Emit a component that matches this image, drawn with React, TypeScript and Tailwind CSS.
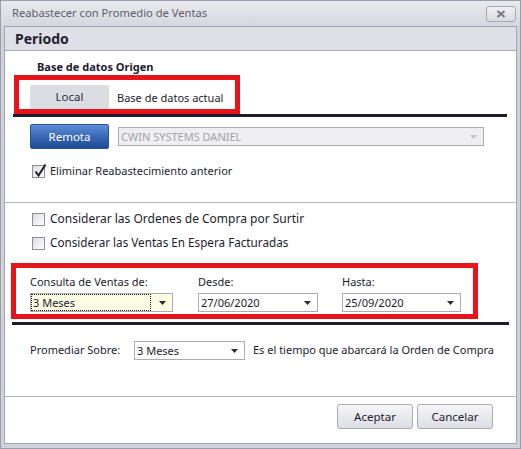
import React from "react";

function Arrow({ light }: { light?: boolean }) {
  return (
    <svg width="7" height="4" viewBox="0 0 7 4" className="shrink-0">
      <path d="M0 0h7L3.5 4z" fill={light ? "#c4c4cc" : "#2b2b33"} />
    </svg>
  );
}

function Combo({
  value,
  className,
  yellow,
  disabled,
}: {
  value: string;
  className: string;
  yellow?: boolean;
  disabled?: boolean;
}) {
  return (
    <div
      className={`flex h-[19px] items-center border border-[#abadb3] pr-[6px] ${
        yellow ? "bg-[#fdfde3]" : disabled ? "bg-[#efeff1]" : "bg-white"
      } ${className}`}
    >
      {yellow ? (
        <div className="mr-[8px] flex h-full flex-1 items-center border border-dotted border-[#222] pl-px leading-none">
          {value}
        </div>
      ) : (
        <div className={`flex-1 pl-[2px] leading-none ${disabled ? "text-[#a3a3a8]" : ""}`}>{value}</div>
      )}
      <Arrow light={disabled} />
    </div>
  );
}

function Check({ checked, label, className }: { checked?: boolean; label: string; className?: string }) {
  return (
    <div className={`flex h-[18px] items-center gap-[5px] pl-[27px] ${className ?? ""}`}>
      <div className="relative h-[13px] w-[13px] border border-[#8e8f94] bg-gradient-to-br from-[#dcdce0] to-white">
        {checked && (
          <svg width="15" height="15" viewBox="0 0 15 15" className="absolute -top-[3px] left-0">
            <path d="M2.5 8.5 L5.5 12.5 L12.5 1.5" fill="none" stroke="#1e1e26" strokeWidth="2" />
          </svg>
        )}
      </div>
      <span>{label}</span>
    </div>
  );
}

function Button({ children }: { children: React.ReactNode }) {
  return (
    <div className="flex h-[25px] w-[76px] items-center justify-center rounded-[3px] border border-[#a9aab6] bg-gradient-to-b from-[#f6f6f8] to-[#dddee5] text-[11.5px]">
      {children}
    </div>
  );
}

export default function App() {
  return (
    <div className="flex h-[449px] w-[521px] flex-col border border-[#9c9dab] bg-[#d1d2da] font-['Noto_Sans',sans-serif] text-[11px] text-[#1c1c2e]">
      {/* title bar */}
      <div className="flex h-[25px] items-center justify-between bg-gradient-to-b from-[#e9eaee] to-[#d6d7de] pl-[11px] pr-[4px]">
        <span className="text-[11.2px] text-[#5e5e6c]">Reabastecer con Promedio de Ventas</span>
        <div className="flex h-[16px] w-[30px] items-center justify-center rounded-[3px] border border-[#a6a7b3] bg-gradient-to-b from-[#f0f0f3] to-[#dadbe1]">
          <svg width="10" height="8" viewBox="0 0 10 8">
            <path d="M1.5 1 L8.5 7 M8.5 1 L1.5 7" stroke="#7c7c8a" strokeWidth="2.2" />
          </svg>
        </div>
      </div>

      <div className="flex flex-1 flex-col px-[3px] pb-[4px]">
        <div className="flex flex-1 flex-col border border-[#a2a3b0] bg-white">
          <div className="flex h-[24px] items-center border-b border-[#a8a9b5] bg-[#dfe0e6] pl-[10px] text-[14px] font-bold text-[#222232]">
            Periodo
          </div>

          <div className="flex flex-1 flex-col">
            <div className="mt-[8px] h-[16px] pl-[32px] font-bold leading-[16px]">Base de datos Origen</div>

            <div className="ml-[9px] flex h-[39px] w-[226px] items-start border-[5px] border-[#e8141c] pl-[11px] pt-[5px]">
              <div className="flex h-[24px] w-[79px] items-center justify-center rounded-[2px] bg-[#dcdde3] text-[11.5px] text-[#2e2e3a]">
                Local
              </div>
              <span className="ml-[8px] mt-[5px]">Base de datos actual</span>
            </div>
            <div className="ml-[8px] h-[3px] w-[494px] bg-[#1d1c2c]" />

            <div className="mt-[7px] flex items-center gap-[9px] pl-[25px]">
              <div className="flex h-[25px] w-[79px] items-center justify-center rounded-[2px] border border-[#2c5295] bg-gradient-to-b from-[#5d8ed8] via-[#3a69b8] to-[#1d4a93] text-[11.5px] text-white">
                Remota
              </div>
              <Combo value="CWIN SYSTEMS DANIEL" className="w-[366px]" disabled />
            </div>

            <div className="mt-[13px]">
              <Check checked label="Eliminar Reabastecimiento anterior" />
            </div>

            <div className="mt-[22px] h-px bg-[#b2b3bf]" />

            <div className="mt-[7px]">
              <Check label="Considerar las Ordenes de Compra por Surtir" className="text-[12px]" />
            </div>
            <div className="mt-[6px]">
              <Check label="Considerar las Ventas En Espera Facturadas" className="text-[11.7px]" />
            </div>

            <div className="ml-[6px] mt-[11px] flex h-[56px] w-[467px] items-start border-[5px] border-[#e8141c] pl-[14px] pt-[6px]">
              <div className="w-[143px]">
                <div className="h-[16px] leading-[16px]">Consulta de Ventas de:</div>
                <Combo value="3 Meses" className="mt-[3px] w-full" yellow />
              </div>
              <div className="ml-[25px] w-[120px]">
                <div className="h-[16px] leading-[16px]">Desde:</div>
                <Combo value="27/06/2020" className="mt-[3px] w-full" />
              </div>
              <div className="ml-[24px] w-[119px]">
                <div className="h-[16px] leading-[16px]">Hasta:</div>
                <Combo value="25/09/2020" className="mt-[3px] w-full" />
              </div>
            </div>
            <div className="ml-[7px] mt-[3px] h-[3px] w-[497px] bg-[#1d1c2c]" />

            <div className="mt-[16px] flex items-center pl-[25px]">
              <span className="w-[104px]">Promediar Sobre:</span>
              <Combo value="3 Meses" className="w-[111px]" />
              <span className="ml-[8px]">Es el tiempo que abarcará la Orden de Compra</span>
            </div>

            <div className="mt-auto flex justify-end gap-[4px] border-t border-[#b2b3bf] pb-[14px] pr-[23px] pt-[7px]">
              <Button>Aceptar</Button>
              <Button>Cancelar</Button>
            </div>
          </div>
        </div>
      </div>
    </div>
  );
}
